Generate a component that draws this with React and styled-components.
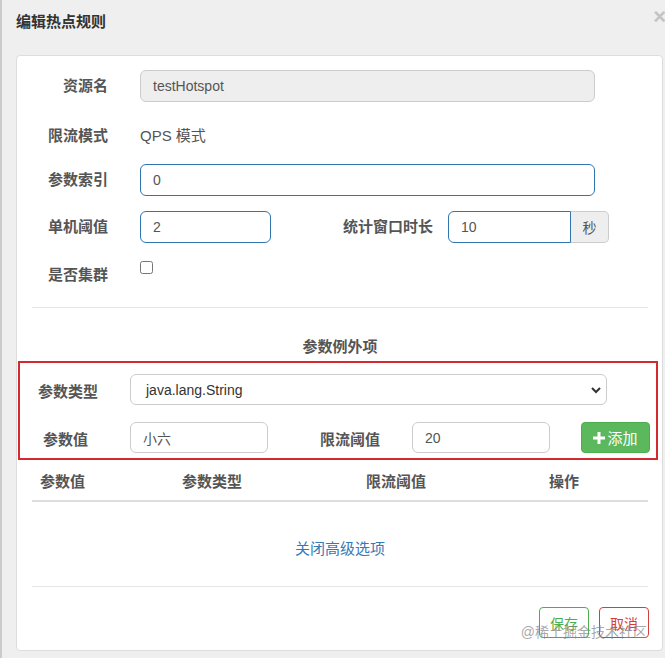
import React from "react";
import styled, { createGlobalStyle } from "styled-components";

const Global = createGlobalStyle`
  html, body { margin: 0; padding: 0; background: #efefef; }
  * { box-sizing: border-box; }
`;

const FONT = `"Liberation Sans", "Noto Sans CJK SC", sans-serif`;

const Page = styled.div`
  min-height: 658px;
  background: #efefef;
  border-left: 2px solid #cbcbcb;
  padding: 0 2px 8px 14px;
  font-family: ${FONT};
  color: #555;
`;

const Header = styled.div`
  display: flex;
  justify-content: space-between;
  align-items: flex-start;
  height: 55px;
  padding-top: 12px;
`;

const Title = styled.h4`
  margin: 0;
  font-size: 15px;
  line-height: 20px;
  font-weight: bold;
  color: #333;
`;

const Close = styled.span`
  font-size: 22px;
  line-height: 20px;
  font-weight: bold;
  color: #c4c4c4;
  margin-top: -5px;
  margin-right: -3px;
`;

const Panel = styled.div`
  position: relative;
  background: #fff;
  border: 1px solid #ddd;
  border-radius: 4px;
  padding: 14px 14px 12px 15px;
`;

const Form = styled.div`
  display: flex;
  flex-direction: column;
  gap: 15px;
`;

const Row = styled.div`
  display: flex;
  align-items: ${(p) => (p.$top ? "flex-start" : "center")};
  height: 32px;
`;

const Label = styled.label`
  flex-shrink: 0;
  width: ${(p) => p.$w || 76}px;
  margin-right: ${(p) => (p.$mr === undefined ? 32 : p.$mr)}px;
  padding-top: ${(p) => p.$pt || 0}px;
  text-align: right;
  font-size: 15px;
  line-height: 20px;
  font-weight: bold;
  color: #555;
`;

const Static = styled.span`
  padding-top: 6px;
  font-size: 15px;
  line-height: 20px;
  color: #555;
`;

const Input = styled.input`
  width: ${(p) => p.$w}px;
  height: ${(p) => p.$h || 32}px;
  flex-shrink: 0;
  border: 1px solid ${(p) => (p.$focus ? "#3274ae" : "#ccc")};
  border-radius: ${(p) => p.$radius || "6px"};
  background: ${(p) => (p.disabled ? "#eee" : "#fff")};
  padding: 0 12px;
  font-family: ${FONT};
  font-size: 14px;
  color: #555;
  outline: none;
  &:disabled { color: #555; opacity: 1; }
`;

const Addon = styled.span`
  display: flex;
  align-items: center;
  justify-content: center;
  width: 38px;
  height: 32px;
  background: #eee;
  border: 1px solid #ccc;
  border-left: none;
  border-radius: 0 5px 5px 0;
  font-size: 14px;
  color: #555;
`;

const Check = styled.input`
  margin: 3px 0 0 0;
  width: 13px;
  height: 13px;
`;

const Divider = styled.div`
  height: 1px;
  background: #e5e5e5;
  margin-top: ${(p) => p.$mt}px;
`;

const SectionTitle = styled.div`
  margin-top: 29px;
  text-align: center;
  font-size: 15px;
  line-height: 20px;
  font-weight: bold;
  color: #555;
`;

const RedBox = styled.div`
  margin: 4px -10px 0 -14px;
  border: 2px solid #d42a2f;
  padding: 11px 0 5px 0;
  display: flex;
  flex-direction: column;
  gap: 17px;
`;

const BoxRow = styled.div`
  display: flex;
  align-items: center;
  height: 31px;
`;

const BoxLabel = styled.label`
  flex-shrink: 0;
  width: ${(p) => p.$w}px;
  padding-left: ${(p) => p.$pl || 0}px;
  padding-right: ${(p) => p.$pr || 0}px;
  padding-top: 4px;
  text-align: ${(p) => (p.$right ? "right" : "left")};
  font-size: 15px;
  line-height: 20px;
  font-weight: bold;
  color: #555;
`;

const SelectBox = styled.div`
  width: 477px;
  height: 31px;
  display: flex;
  align-items: center;
  justify-content: space-between;
  border: 1px solid #ccc;
  border-radius: 6px;
  padding: 0 4px 0 15px;
  font-size: 14px;
  color: #333;
`;

const AddButton = styled.button`
  margin-left: 31px;
  width: 69px;
  height: 31px;
  display: flex;
  align-items: center;
  justify-content: center;
  gap: 2px;
  background: #5cb85c;
  border: 1px solid #4cae4c;
  border-radius: 4px;
  color: #fff;
  font-family: ${FONT};
  font-size: 15px;
  padding: 0;
`;

const Table = styled.div`
  margin-top: 4px;
`;

const TableHead = styled.div`
  display: grid;
  grid-template-columns: 142px 184px 183px 1fr;
  border-bottom: 2px solid #ddd;
`;

const Th = styled.div`
  padding: 8px;
  font-size: 15px;
  line-height: 20px;
  font-weight: bold;
  color: #555;
`;

const LinkText = styled.a`
  display: block;
  margin-top: 37px;
  text-align: center;
  font-size: 15px;
  line-height: 20px;
  color: #337ab7;
  text-decoration: none;
`;

const Footer = styled.div`
  margin-top: 20px;
  margin-right: -1px;
  display: flex;
  justify-content: flex-end;
  gap: 10px;
`;

const OutlineButton = styled.button`
  height: 31px;
  padding: 0 10px;
  background: #fff;
  border: 1px solid ${(p) => p.$color};
  border-radius: 4px;
  color: ${(p) => p.$color};
  font-family: ${FONT};
  font-size: 14px;
`;

const Watermark = styled.div`
  position: absolute;
  right: 15px;
  bottom: 10px;
  font-size: 14px;
  line-height: 16px;
  color: rgba(130, 130, 130, 0.7);
  pointer-events: none;
`;

const PlusIcon = () => (
  <svg width="12" height="12" viewBox="0 0 12 12">
    <path d="M4.5 0h3v4.5H12v3H7.5V12h-3V7.5H0v-3h4.5z" fill="#fff" />
  </svg>
);

const Chevron = () => (
  <svg width="12" height="8" viewBox="0 0 12 8">
    <polyline points="2,2 6,6 10,2" fill="none" stroke="#333" strokeWidth="2" />
  </svg>
);

export default function App() {
  return (
    <>
      <Global />
      <Page>
        <Header>
          <Title>编辑热点规则</Title>
          <Close>×</Close>
        </Header>
        <Panel>
          <Form>
            <Row>
              <Label>资源名</Label>
              <Input $w={455} disabled defaultValue="testHotspot" />
            </Row>
            <Row>
              <Label $pt={6}>限流模式</Label>
              <Static>QPS 模式</Static>
            </Row>
            <Row>
              <Label>参数索引</Label>
              <Input $w={455} $focus defaultValue="0" />
            </Row>
            <Row>
              <Label>单机阈值</Label>
              <Input $w={131} $focus defaultValue="2" />
              <Label $w={162} $mr={15}>统计窗口时长</Label>
              <Input $w={123} $focus $radius="6px 0 0 6px" defaultValue="10" />
              <Addon>秒</Addon>
            </Row>
            <Row $top>
              <Label $pt={7}>是否集群</Label>
              <Check type="checkbox" />
            </Row>
          </Form>
          <Divider $mt={17} />
          <SectionTitle>参数例外项</SectionTitle>
          <RedBox>
            <BoxRow>
              <BoxLabel $w={110} $pl={18}>参数类型</BoxLabel>
              <SelectBox>
                <span>java.lang.String</span>
                <Chevron />
              </SelectBox>
            </BoxRow>
            <BoxRow>
              <BoxLabel $w={110} $pl={23}>参数值</BoxLabel>
              <Input $w={138} $h={31} defaultValue="小六" />
              <BoxLabel $w={144} $pr={32} $right>限流阈值</BoxLabel>
              <Input $w={138} $h={31} defaultValue="20" />
              <AddButton>
                <PlusIcon />
                <span>添加</span>
              </AddButton>
            </BoxRow>
          </RedBox>
          <Table>
            <TableHead>
              <Th>参数值</Th>
              <Th>参数类型</Th>
              <Th>限流阈值</Th>
              <Th>操作</Th>
            </TableHead>
          </Table>
          <LinkText>关闭高级选项</LinkText>
          <Divider $mt={27} />
          <Footer>
            <OutlineButton $color="#4cae4c">保存</OutlineButton>
            <OutlineButton $color="#d43f3a">取消</OutlineButton>
          </Footer>
          <Watermark>@稀土掘金技术社区</Watermark>
        </Panel>
      </Page>
    </>
  );
}
